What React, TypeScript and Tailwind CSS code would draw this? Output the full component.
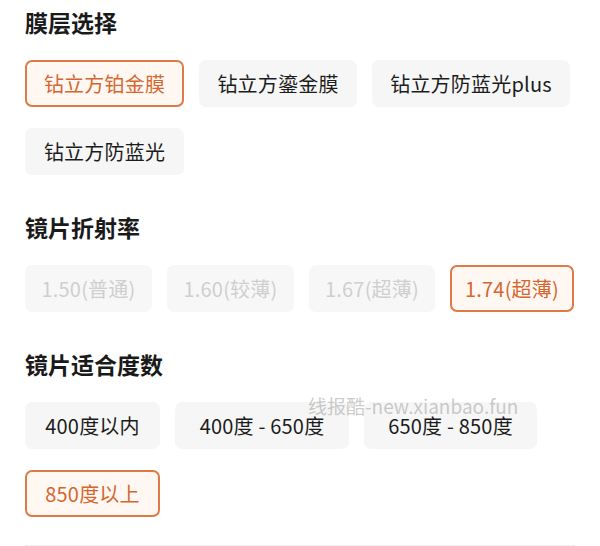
const sections = [
  {
    title: "膜层选择",
    options: [
      { label: "钻立方铂金膜", state: "selected", width: "w-[159px]" },
      { label: "钻立方鎏金膜", state: "normal", width: "w-[158px]" },
      { label: "钻立方防蓝光plus", state: "normal", width: "w-[198px]" },
      { label: "钻立方防蓝光", state: "normal", width: "w-[159px]" },
    ],
  },
  {
    title: "镜片折射率",
    options: [
      { label: "1.50(普通)", state: "disabled", width: "w-[127px]" },
      { label: "1.60(较薄)", state: "disabled", width: "w-[127px]" },
      { label: "1.67(超薄)", state: "disabled", width: "w-[126px]" },
      { label: "1.74(超薄)", state: "selected", width: "w-[124px]" },
    ],
  },
  {
    title: "镜片适合度数",
    options: [
      { label: "400度以内", state: "normal", width: "w-[135px]" },
      { label: "400度 - 650度", state: "normal", width: "w-[174px]" },
      { label: "650度 - 850度", state: "normal", width: "w-[173px]" },
      { label: "850度以上", state: "selected", width: "w-[135px]" },
    ],
  },
];

function optionClass(state: string) {
  if (state === "selected")
    return "border-2 border-[#dd7a45] bg-[#fff7f2] text-[#d4672f]";
  if (state === "disabled") return "border-2 border-transparent bg-[#f7f7f7] text-[#cfcfcf]";
  return "border-2 border-transparent bg-[#f6f6f6] text-[#1c1c1c]";
}

export default function App() {
  return (
    <div
      className="relative h-[546px] w-[600px] overflow-hidden bg-white px-[25px] pt-[7px]"
      style={{ fontFamily: '"Noto Sans CJK SC", "Noto Sans", sans-serif' }}
    >
      {sections.map((section, i) => (
        <div key={section.title} className={i === 0 ? "" : "mt-[37px]"}>
          <h2 className="text-[23px] font-bold leading-[30px] text-[#1a1a1a]">
            {section.title}
          </h2>
          <div className="mt-[23px] flex flex-wrap gap-x-[15px] gap-y-[21px]">
            {section.options.map((option) => (
              <div
                key={option.label}
                className={`flex h-[47px] shrink-0 items-center justify-center whitespace-nowrap rounded-[7px] text-[20px] leading-none tracking-[0.2px] ${option.width} ${optionClass(option.state)}`}
              >
                {option.label}
              </div>
            ))}
          </div>
        </div>
      ))}
      <div className="mt-[28px] h-px bg-[#eeeeee]" />
      <div className="pointer-events-none absolute left-[308px] top-[394px] text-[19px] leading-[24px] text-[#a0a0a0]/55">
        线报酷-new.xianbao.fun
      </div>
    </div>
  );
}
